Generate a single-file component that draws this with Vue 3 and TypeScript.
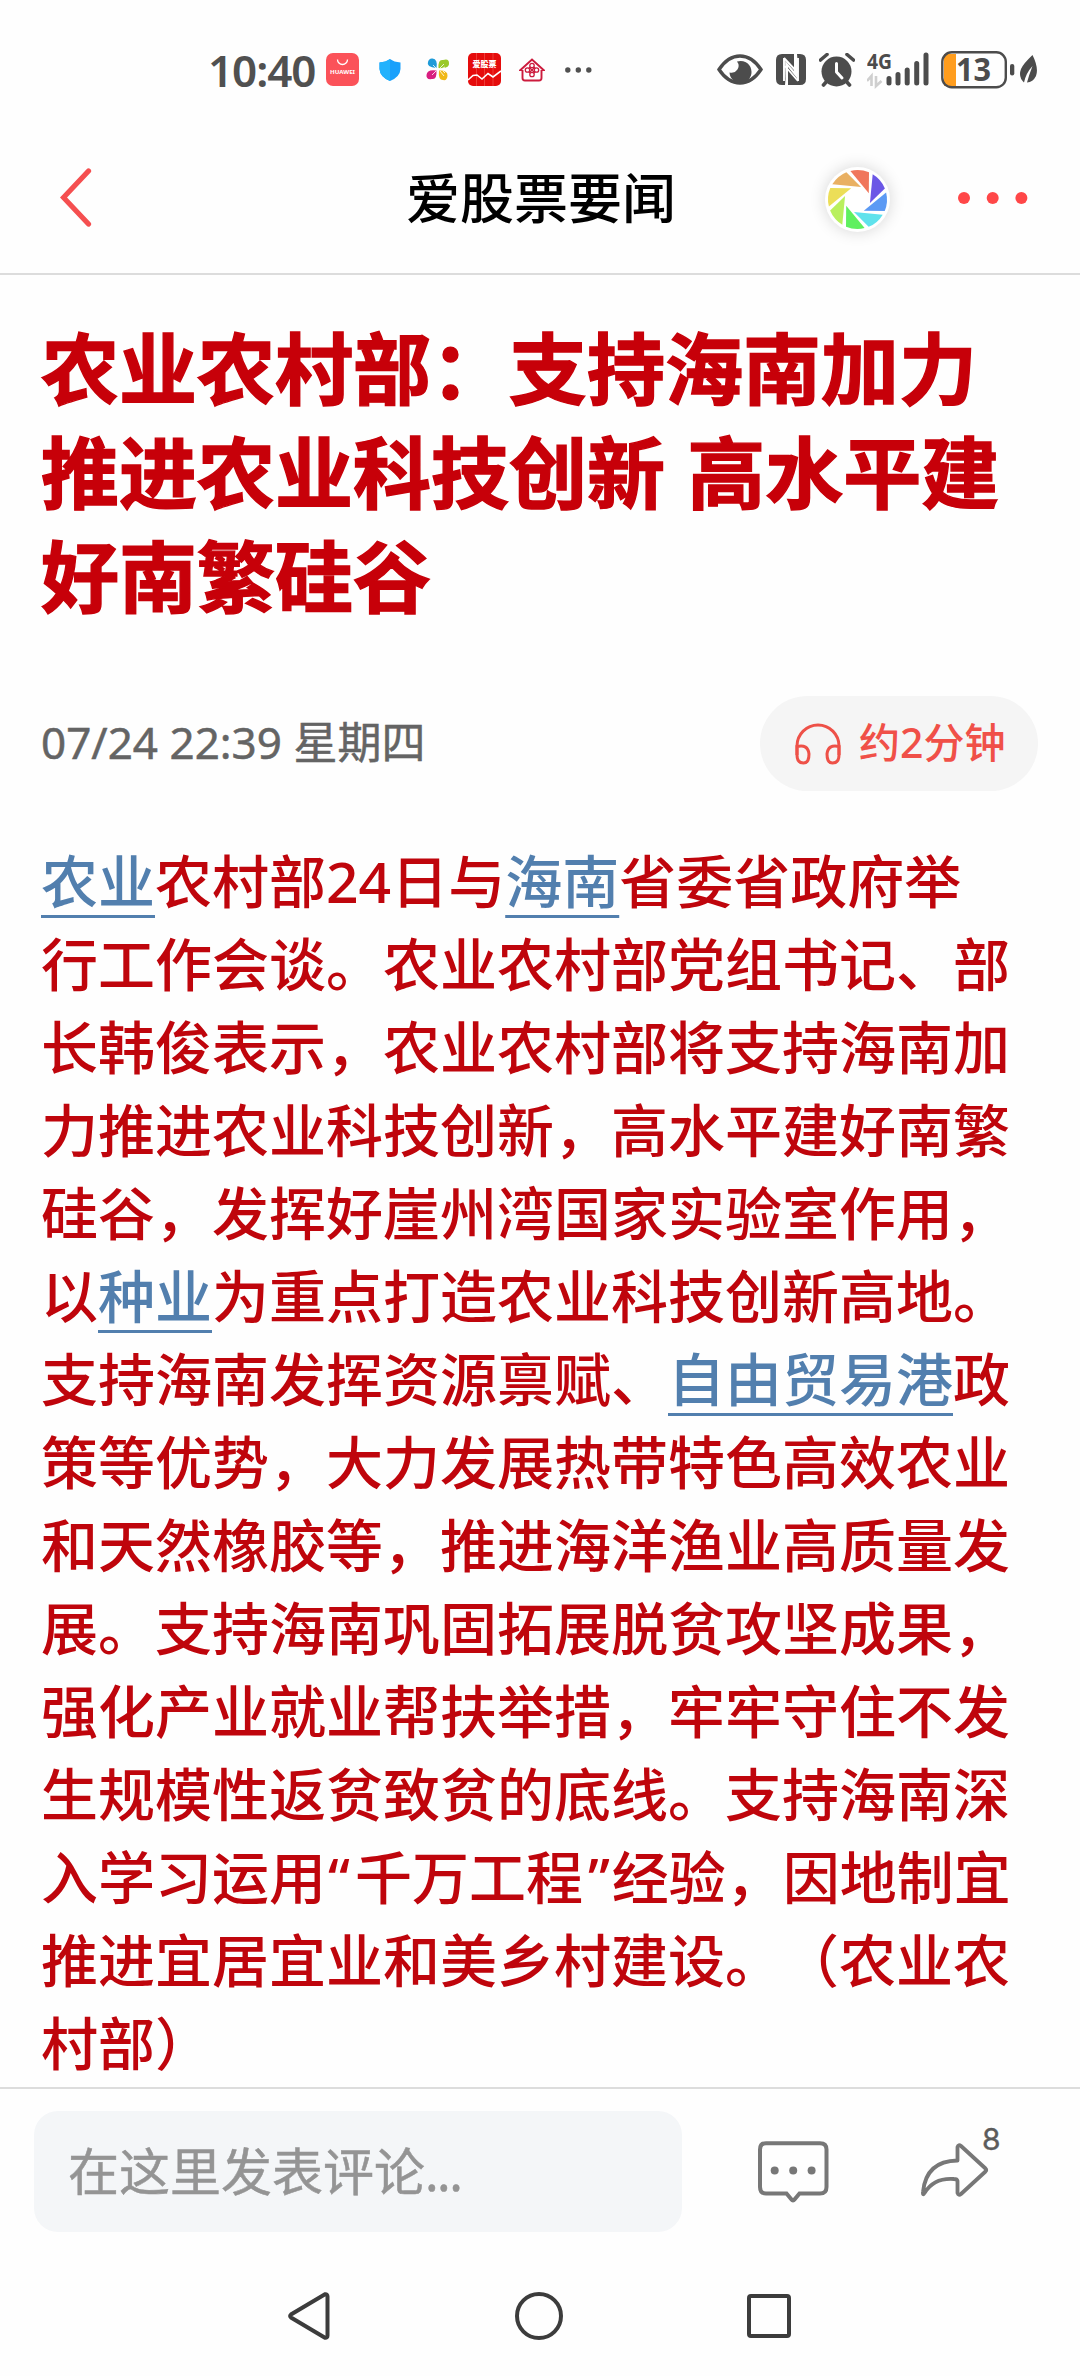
<script setup lang="ts">
interface Segment {
  text: string
  kind?: 'link' | 'open' | 'close'
}

const titleLines: string[] = ['农业农村部：支持海南加力', '推进农业科技创新 高水平建', '好南繁硅谷']

const t = (text: string): Segment => ({ text })
const a = (text: string): Segment => ({ text, kind: 'link' })

const bodyLines: Segment[][] = [
  [a('农业'), t('农村部24日与'), a('海南'), t('省委省政府举')],
  [t('行工作会谈。农业农村部党组书记、部')],
  [t('长韩俊表示，农业农村部将支持海南加')],
  [t('力推进农业科技创新，高水平建好南繁')],
  [t('硅谷，发挥好崖州湾国家实验室作用，')],
  [t('以'), a('种业'), t('为重点打造农业科技创新高地。')],
  [t('支持海南发挥资源禀赋、'), a('自由贸易港'), t('政')],
  [t('策等优势，大力发展热带特色高效农业')],
  [t('和天然橡胶等，推进海洋渔业高质量发')],
  [t('展。支持海南巩固拓展脱贫攻坚成果，')],
  [t('强化产业就业帮扶举措，牢牢守住不发')],
  [t('生规模性返贫致贫的底线。支持海南深')],
  [t('入学习运用'), { text: '“', kind: 'open' }, t('千万工程'), { text: '”', kind: 'close' }, t('经验，因地制宜')],
  [t('推进宜居宜业和美乡村建设。（农业农')],
  [t('村部）')],
]

const blades: string[] = ['#f0765c', '#6b57e6', '#5c9af4', '#5fe2ec', '#5ff05f', '#b9f05e', '#ecde58', '#e9b062']
</script>

<template>
  <div class="screen">
    <div class="status">
      <span class="clock">10:40</span>
      <div class="notes">
        <svg width="33" height="33" viewBox="0 0 33 33">
          <rect width="33" height="33" rx="7" fill="#fb5259" />
          <path d="M11.500 6.500a5 5 0 0 0 10 0" fill="none" stroke="#fff" stroke-width="1.300" />
          <text x="16.500" y="21" text-anchor="middle" class="hw" textLength="25" lengthAdjust="spacingAndGlyphs">HUAWEI</text>
        </svg>
        <svg class="shield" width="22" height="22" viewBox="0 0 22 22">
          <path d="M11 0Q15 3 21.500 3.500V10Q21 18 11 22Q1 18 .5 10V3.500Q7 3 11 0Z" fill="#1aa0fb" />
          <path d="M11 0Q7 3 .5 3.500V10Q1 18 11 22Z" fill="#22b2fd" />
        </svg>
        <svg class="petals" width="24" height="23" viewBox="0 0 24 23">
          <path d="M10.500 10Q0 9 2 4Q3 0 6.500.5Q12 1 10.500 10Z" fill="#1f9bd8" />
          <path d="M12.500 10Q12 1 17 2Q23 0 23 5Q24 11 12.500 10Z" fill="#9ac928" />
          <path d="M10.500 12.500Q11 22 6 21Q0 22 .5 17Q1 11 10.500 12.500Z" fill="#d81e80" />
          <path d="M13 12.500Q22 12 21.500 18Q21 23 17 22Q12 22 13 12.500Z" fill="#f0b817" />
          <path d="M7 7l3 3M14 10l4-4M15 11l4-2M6 17l4-4M14 13l4 5M17 13l2 2" stroke="#fff" stroke-width=".8" />
        </svg>
        <svg class="stock" width="33" height="33" viewBox="0 0 33 33">
          <rect width="33" height="33" rx="5" fill="#e50c0c" />
          <path d="M8.500 0v33M16.500 0v33M25 0v33" stroke="#f25f55" stroke-width=".6" />
          <text x="16.500" y="13.500" text-anchor="middle" class="agp">爱股票</text>
          <path d="M0 27L5 22.500L9 22L14 26L20 20.500L25 24L33 18" fill="none" stroke="#fff" stroke-width="1.600" />
        </svg>
        <svg class="house" width="26" height="24" viewBox="0 0 26 24" fill="none" stroke="#cc1b3d">
          <path d="M3 12H1.500L13 1.500L24.500 12H23M3.500 12v8q0 2.500 2.500 2.500h14q2.500 0 2.500-2.500v-8" stroke-width="1.900" />
          <g stroke-width="1.300">
            <circle cx="13" cy="7.500" r="2.200" /><circle cx="8.500" cy="12" r="2.200" />
            <circle cx="17.500" cy="12" r="2.200" /><circle cx="13" cy="16.500" r="2.200" />
            <path d="M10 9l6 6M16 9l-6 6" />
          </g>
        </svg>
        <svg class="more" width="27" height="6" viewBox="0 0 27 6" fill="#505050">
          <circle cx="2.800" cy="3" r="2.700" /><circle cx="13.300" cy="3" r="2.700" /><circle cx="23.800" cy="3" r="2.700" />
        </svg>
      </div>
      <div class="system">
        <svg width="46" height="31" viewBox="0 0 46 31">
          <path d="M2 15.500Q11 2 23 2Q35 2 44 15.500Q35 29 23 29Q11 29 2 15.500Z" fill="none" stroke="#4c4c4c" stroke-width="3.400" />
          <path d="M20 7.500A11 11 0 1 1 12.500 18.500A7 7 0 0 0 20 7.500Z" fill="#4c4c4c" />
        </svg>
        <svg class="nfc" width="30" height="31" viewBox="0 0 30 31">
          <path d="M6 0H9L9.500 25L9 31H6Q0 31 0 25V6Q0 0 6 0Z" fill="#4c4c4c" />
          <path d="M24 31H21.500V6L21 0H24Q30 0 30 6V25Q30 31 24 31Z" fill="#4c4c4c" />
          <path d="M6 0H18V17L6 3ZM12 31V13L24 28L23 31Z" fill="#4c4c4c" />
          <path d="M8 4V27M22 4V27M8 4L22 19M9 12L22 27" fill="none" stroke="#fff" stroke-width="1.900" />
        </svg>
        <svg class="alarm" width="36" height="34" viewBox="0 0 36 34">
          <circle cx="17.500" cy="18.500" r="15" fill="#4c4c4c" />
          <path d="M1.500 7L8 1.500M28 1.500L34.500 7M4.500 32L8 28M30.500 32L27 28" stroke="#4c4c4c" stroke-width="3.600" stroke-linecap="round" />
          <path d="M17.500 10.500V19L23 25" fill="none" stroke="#fff" stroke-width="3" stroke-linecap="round" stroke-linejoin="round" />
        </svg>
        <svg class="signal" width="62" height="51" viewBox="0 -8 62 51">
          <text x="0" y="16.500" class="net" textLength="25" lengthAdjust="spacingAndGlyphs">4G</text>
          <path d="M0 29L4.500 24V34M9 24V34L14.500 29" fill="none" stroke="#cfcfcf" stroke-width="2.600" />
          <g stroke="#4c4c4c" stroke-width="5" stroke-linecap="round">
            <path d="M22 26.500V31M31 22.500V31M40.200 18V31M49.700 11.500V31M59 3V31" />
          </g>
        </svg>
        <svg class="battery" width="74" height="54" viewBox="0 -8 74 54">
          <rect x="3" y="3" width="12" height="32" fill="#ff9d1e" />
          <rect x="1.300" y="1.300" width="63.500" height="35" rx="9.500" fill="none" stroke="#4c4c4c" stroke-width="2.400" />
          <rect x="69" y="13" width="4.300" height="11.500" rx="2.100" fill="#4c4c4c" />
          <text x="32.500" y="30" text-anchor="middle" class="pct" textLength="35" lengthAdjust="spacingAndGlyphs">13</text>
        </svg>
        <svg class="leaf" width="18" height="29" viewBox="0 0 18 29">
          <path d="M12.500 0Q19 13 16 21Q13 27 7 27.500Q9 20 12.500 11Q6 18 4 27.500Q-2 22 1 14Q3 9 12.500 0Z" fill="#4c4c4c" />
        </svg>
      </div>
    </div>

    <header class="bar">
      <svg class="back" width="32" height="60" viewBox="0 0 32 60">
        <path d="M28.500 3L3.500 29.500L28.500 56" fill="none" stroke="#f54f50" stroke-width="5.200" stroke-linecap="round" stroke-linejoin="miter" />
      </svg>
      <h1>爱股票要闻</h1>
      <div class="lens">
        <svg width="65" height="65" viewBox="-32.500 -32.500 65 65">
          <path
            v-for="(color, i) in blades"
            :key="color"
            d="M-7.100 -28.600A29.500 29.500 0 0 1 11.500 -27.200L11.300 -6.300Z"
            :fill="color"
            :transform="`rotate(${i * 45})`"
          />
        </svg>
      </div>
      <svg class="dots" width="70" height="12" viewBox="0 0 70 12" fill="#ff4748">
        <circle cx="6" cy="6" r="6" /><circle cx="34.700" cy="6" r="6" /><circle cx="63.400" cy="6" r="6" />
      </svg>
    </header>

    <main>
      <h2>
        <span v-for="line in titleLines" :key="line">{{ line }}</span>
      </h2>
      <div class="meta">
        <time>07/24 22:39 星期四</time>
        <button class="listen">
          <svg width="46" height="42" viewBox="0 0 46 42" fill="none" stroke="#ee5148" stroke-width="3">
            <path d="M2 32V23A21 21 0 0 1 44 23V32" />
            <path d="M2 23.500Q13 21 14 31Q14 40 8.500 40Q2 40 2 32ZM44 23.500Q33 21 32 31Q32 40 37.500 40Q44 40 44 32Z" />
          </svg>
          <span>约2分钟</span>
        </button>
      </div>
      <article>
        <p v-for="(line, i) in bodyLines" :key="i"><span v-for="(s, j) in line" :key="j" :class="s.kind">{{ s.text }}</span></p>
      </article>
    </main>

    <footer>
      <div class="input">在这里发表评论<span>...</span></div>
      <svg class="chat" width="71" height="62" viewBox="0 0 71 62">
        <path d="M8 2.200H62Q68.500 2.200 68.500 8.500V46Q68.500 52.500 62 52.500H41.500L36.500 58.500Q35 60.500 33.500 58.500L28.500 52.500H8Q2 52.500 2 46V8.500Q2 2.200 8 2.200Z" fill="none" stroke="#777" stroke-width="4" />
        <g fill="#777"><circle cx="16.700" cy="29.500" r="4" /><circle cx="35.200" cy="29.500" r="4" /><circle cx="53.600" cy="29.500" r="4" /></g>
      </svg>
      <div class="share">
        <svg width="68" height="55" viewBox="0 0 68 55">
          <path d="M36.500 17.500V4Q37.500 1 40 3L64.500 25.500Q66 27 64.500 28.500L40 51Q37.500 53 36.500 50V38Q36 36 33 36Q13 34.500 3.500 50Q1.500 53 2 49Q5 18 36.500 17.500Z" fill="none" stroke="#777" stroke-width="3.800" stroke-linejoin="round" />
        </svg>
        <span>8</span>
      </div>
    </footer>

    <nav>
      <svg width="42" height="48" viewBox="0 0 42 48">
        <path d="M37 2.300L3 22.500Q1.200 24 3 25.500L37 45.700Q39.500 46 39.500 43.500V4.500Q39.500 2 37 2.300Z" fill="none" stroke="#3c3c3c" stroke-width="4" />
      </svg>
      <svg width="48" height="48" viewBox="0 0 48 48"><circle cx="24" cy="24" r="22" fill="none" stroke="#3c3c3c" stroke-width="4" /></svg>
      <svg width="44" height="44" viewBox="0 0 44 44"><rect x="2" y="2" width="40" height="40" rx="2" fill="none" stroke="#3c3c3c" stroke-width="4" /></svg>
    </nav>
  </div>
</template>

<style>
body {
  background: #fefefe;
}
</style>

<style scoped>
.screen {
  width: 1080px;
  height: 2376px;
  display: flex;
  flex-direction: column;
  overflow: hidden;
  background: #fefefe;
  font-family: 'Noto Sans', 'Noto Sans CJK SC', sans-serif;
  text-spacing-trim: space-all;
}
svg {
  display: block;
  flex: none;
}
.status {
  height: 125px;
  box-sizing: border-box;
  padding: 14px 42px 0 208px;
  display: flex;
  align-items: center;
}
.clock {
  width: 118px;
  font: 600 44px/60px 'Noto Sans', sans-serif;
  letter-spacing: -1.1px;
  color: #505050;
}
.notes,
.system {
  display: flex;
  align-items: center;
}
.system {
  margin-left: auto;
}
.hw {
  font: 700 6px 'Noto Sans', sans-serif;
  fill: #fff;
}
.agp {
  font: 900 8px 'Noto Sans CJK SC', sans-serif;
  fill: #fff;
}
.shield { margin-left: 20px; }
.petals { margin-left: 25px; }
.stock { margin-left: 18px; }
.house { margin-left: 18px; }
.more { margin-left: 20px; }
.nfc { margin-left: 13px; }
.alarm { margin-left: 13px; }
.signal { margin-left: 12px; }
.battery { margin-left: 12px; }
.leaf { margin-left: 5px; }
.net {
  font: 700 22px 'Noto Sans', sans-serif;
  fill: #4c4c4c;
}
.pct {
  font: 700 32px 'Noto Sans', sans-serif;
  fill: #4c4c4c;
}
.bar {
  height: 150px;
  box-sizing: border-box;
  border-bottom: 2px solid #dcdcdc;
  padding: 0 52px 2px 60px;
  display: flex;
  align-items: center;
}
h1 {
  margin: 0 0 0 314px;
  width: 419px;
  font-size: 54px;
  line-height: 78px;
  font-weight: 500;
  color: #000;
}
.lens {
  width: 65px;
  height: 65px;
  margin-top: 2px;
  border-radius: 50%;
  background: #fff;
  box-shadow: 0 0 16px rgba(0, 0, 0, 0.16);
}
.dots {
  margin-left: auto;
}
main {
  height: 1812px;
  box-sizing: border-box;
  padding: 42px 42px 0 41px;
}
h2 {
  margin: 0;
  font-size: 78px;
  line-height: 104px;
  font-weight: 700;
  word-spacing: 2px;
  color: #c70009;
  -webkit-text-stroke: 1.4px #c70009;
}
h2 span {
  display: block;
  white-space: pre;
}
.meta {
  margin-top: 67px;
  height: 95px;
  display: flex;
  justify-content: space-between;
  align-items: center;
}
time {
  margin-top: -3px;
  font-size: 44px;
  line-height: 60px;
  color: #646464;
  -webkit-text-stroke: 0.5px #646464;
}
.listen {
  width: 278px;
  height: 95px;
  border: 0;
  border-radius: 48px;
  padding: 0 0 0 35px;
  background: #f5f5f5;
  display: flex;
  align-items: center;
  gap: 18px;
  font: 500 41px/60px 'Noto Sans', 'Noto Sans CJK SC', sans-serif;
  color: #f05048;
}
.listen span {
  margin-top: -3px;
}
article {
  margin-top: 49px;
  font-size: 57px;
  line-height: 83px;
  font-weight: 500;
  color: #bf050c;
}
p {
  margin: 0;
  height: 83px;
  white-space: nowrap;
}
.link {
  color: #527fae;
  text-decoration: underline;
  text-decoration-thickness: 3px;
  text-underline-offset: 12px;
  text-decoration-skip-ink: none;
}
.open {
  padding: 0 5px 0 2px;
}
.close {
  padding: 0 2px 0 5px;
}
footer {
  height: 166px;
  box-sizing: border-box;
  border-top: 2px solid #dcdcdc;
  padding: 22px 0 0 34px;
  display: flex;
  align-items: flex-start;
}
.input {
  width: 648px;
  height: 121px;
  box-sizing: border-box;
  padding-left: 34px;
  border-radius: 24px;
  background: #f4f6f8;
  font-size: 51px;
  line-height: 120px;
  color: #949494;
  -webkit-text-stroke: 0.5px #949494;
}
.input span {
  letter-spacing: -1.6px;
}
.chat {
  margin: 30px 0 0 76px;
}
.share {
  position: relative;
  margin: 32px 0 0 92px;
}
.share span {
  position: absolute;
  left: 61px;
  top: -22px;
  font: 400 31px/36px 'Inter', sans-serif;
  font-size: 30px;
  color: #5c5c5c;
  -webkit-text-stroke: 0.4px #5c5c5c;
}
nav {
  margin-top: 39px;
  height: 48px;
  padding: 0 289px 0 288px;
  display: flex;
  align-items: center;
  justify-content: space-between;
}
</style>
